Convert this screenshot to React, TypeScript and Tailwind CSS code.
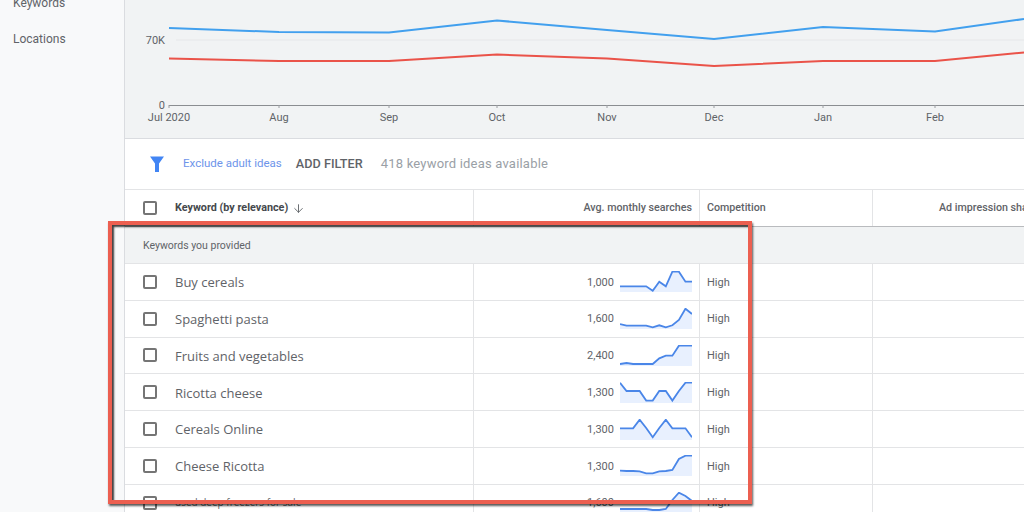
import { ArrowDown } from "lucide-react";

const months: [string, number][] = [
  ["Jul 2020", 169],
  ["Aug", 279],
  ["Sep", 389],
  ["Oct", 497],
  ["Nov", 607],
  ["Dec", 714],
  ["Jan", 823],
  ["Feb", 935],
];

const blueLine = "169,28 279,32 389,32.5 497,20.5 607,30 714,39 823,27 935,31.5 1024,19";
const redLine = "169,58.5 279,61 389,61 497,54.5 607,58.5 714,66 823,61 935,61 1024,52.5";

const rows = [
  { name: "Buy cereals", searches: "1,000", trend: [15.3, 15.3, 15.3, 15.3, 15.3, 19.7, 10.7, 15.3, 0.7, 0.7, 10.7, 10.7] },
  { name: "Spaghetti pasta", searches: "1,600", trend: [16, 17.7, 17.7, 17.7, 17.7, 19.3, 17.3, 19.3, 17.3, 12, 0.7, 6] },
  { name: "Fruits and vegetables", searches: "2,400", trend: [19, 18, 19, 19, 19, 19, 13.3, 10.7, 10.7, 0.7, 0.7, 0.7] },
  { name: "Ricotta cheese", searches: "1,300", trend: [0.7, 9, 9, 9, 18.6, 18.6, 9, 9, 18.6, 9, 0.7, 0.7] },
  { name: "Cereals Online", searches: "1,300", trend: [9.3, 9.3, 9.3, 0.7, 9, 18.3, 9, 0.7, 9.3, 9.3, 9.3, 18.3] },
  { name: "Cheese Ricotta", searches: "1,300", trend: [15.7, 16, 16, 16.3, 18.3, 18.3, 16.3, 16, 15, 4, 0.7, 0.7] },
  { name: "used deep freezers for sale", searches: "1,600", small: true, trend: [17, 17, 17, 17, 17, 18, 18, 17, 8, 0.7, 4, 9] },
];

function Sparkline({ trend }: { trend: number[] }) {
  const pts = trend.map((y, i) => `${(i * 72) / 11},${y}`).join(" ");
  return (
    <svg width="72" height="21" viewBox="0 0 72 21" className="shrink-0">
      <polygon points={`0,21 ${pts} 72,21`} fill="#e8f0fe" />
      <polyline points={pts} fill="none" stroke="#4a86e8" strokeWidth="1.8" />
    </svg>
  );
}

function Checkbox() {
  return <div className="w-[14px] h-[14px] shrink-0 rounded-[2px] border-2 border-[#757575]" />;
}

export default function App() {
  return (
    <div className="relative flex w-[1024px] h-[512px] overflow-hidden bg-white font-['Roboto',sans-serif] text-[#5f6368]">
      <aside className="w-[125px] shrink-0 bg-[#f8f9fa] border-r border-[#dadce0] pl-[13px] text-[12px]">
        <div className="-mt-[5px] leading-[16px]">Keywords</div>
        <div className="mt-[20px] leading-[16px]">Locations</div>
      </aside>

      <main className="flex-1 min-w-0 flex flex-col">
        <div className="h-[139px] shrink-0 bg-[#f1f3f4] border-b border-[#dadce0]">
          <svg width="899" height="138" viewBox="125 0 899 138">
            <line x1="176" y1="40" x2="1024" y2="40" stroke="#e6e7e9" strokeWidth="1" />
            <line x1="169" y1="105.5" x2="1024" y2="105.5" stroke="#8a8d91" strokeWidth="1" />
            {months.map(([label, x]) => (
              <g key={label}>
                <line x1={x} y1="105" x2={x} y2="108" stroke="#9a9da1" strokeWidth="1" />
                <text x={x} y="121" textAnchor="middle" fontSize="11" fill="#5f6368" fontFamily="Roboto, sans-serif">
                  {label}
                </text>
              </g>
            ))}
            <text x="165" y="44" textAnchor="end" fontSize="11" fill="#5f6368" fontFamily="Roboto, sans-serif">70K</text>
            <text x="165" y="109" textAnchor="end" fontSize="11" fill="#5f6368" fontFamily="Roboto, sans-serif">0</text>
            <polyline points={blueLine} fill="none" stroke="#42a0ee" strokeWidth="2" />
            <polyline points={redLine} fill="none" stroke="#ea5349" strokeWidth="2" />
          </svg>
        </div>

        <div className="h-[51px] shrink-0 flex items-center border-b border-[#e3e4e6] pl-[25px]">
          <svg width="14" height="16" viewBox="0 0 14 16" className="shrink-0">
            <path d="M0 0.5h14L9 7.5V16H5V7.5Z" fill="#4285f4" />
          </svg>
          <span className="ml-[19px] text-[11.5px] text-[#6d94ea]">Exclude adult ideas</span>
          <span className="ml-[14px] text-[12.7px] font-medium">ADD FILTER</span>
          <span className="ml-[18px] text-[13px] tracking-[0.2px] text-[#9aa0a6]">418 keyword ideas available</span>
        </div>

        <div className="h-[37px] shrink-0 flex items-stretch border-b border-[#b9bbbe] text-[10.7px] font-medium">
          <div className="w-[349px] shrink-0 flex items-center pl-[18px] border-r border-[#e3e4e6]">
            <Checkbox />
            <span className="ml-[18px] text-[10.8px] font-bold text-[#45484c]">Keyword (by relevance)</span>
            <ArrowDown size={13} strokeWidth={1.7} className="ml-[4px] mt-[1px]" />
          </div>
          <div className="w-[226px] shrink-0 flex items-center justify-end pr-[7px] border-r border-[#e3e4e6]">
            Avg. monthly searches
          </div>
          <div className="w-[173px] shrink-0 flex items-center pl-[7px] border-r border-[#e3e4e6]">Competition</div>
          <div className="flex-1 min-w-0 flex items-center pl-[66px] whitespace-nowrap">Ad impression share</div>
        </div>

        <div className="h-[37px] shrink-0 flex items-center bg-[#f1f3f4] border-b border-[#e3e4e6] pl-[18px] pt-[2px] text-[10.5px]">
          Keywords you provided
        </div>

        {rows.map((row) => (
          <div key={row.name} className="h-[36.8px] shrink-0 flex items-stretch border-b border-[#e3e4e6]">
            <div className="w-[349px] shrink-0 flex items-center pl-[18px] border-r border-[#e3e4e6]">
              <Checkbox />
              <span className={row.small ? "ml-[18px] text-[10px] font-['Open_Sans',sans-serif]" : "ml-[18px] mt-[2px] text-[13px] font-['Open_Sans',sans-serif]"}>
                {row.name}
              </span>
            </div>
            <div className="w-[226px] shrink-0 flex items-center justify-end pr-[7px] border-r border-[#e3e4e6] text-[11px]">
              <span className="mr-[6px] mt-[2px]">{row.searches}</span>
              <Sparkline trend={row.trend} />
            </div>
            <div className="w-[173px] shrink-0 flex items-center pl-[7px] pt-[2px] border-r border-[#e3e4e6] text-[11px]">High</div>
            <div className="flex-1" />
          </div>
        ))}
      </main>

      <div className="absolute left-[108px] top-[221px] w-[644px] h-[283px] border-4 border-[#ec5f50] shadow-[1px_2px_2px_rgba(0,0,0,0.65),inset_2px_2px_2px_rgba(0,0,0,0.75)]" />
    </div>
  );
}
